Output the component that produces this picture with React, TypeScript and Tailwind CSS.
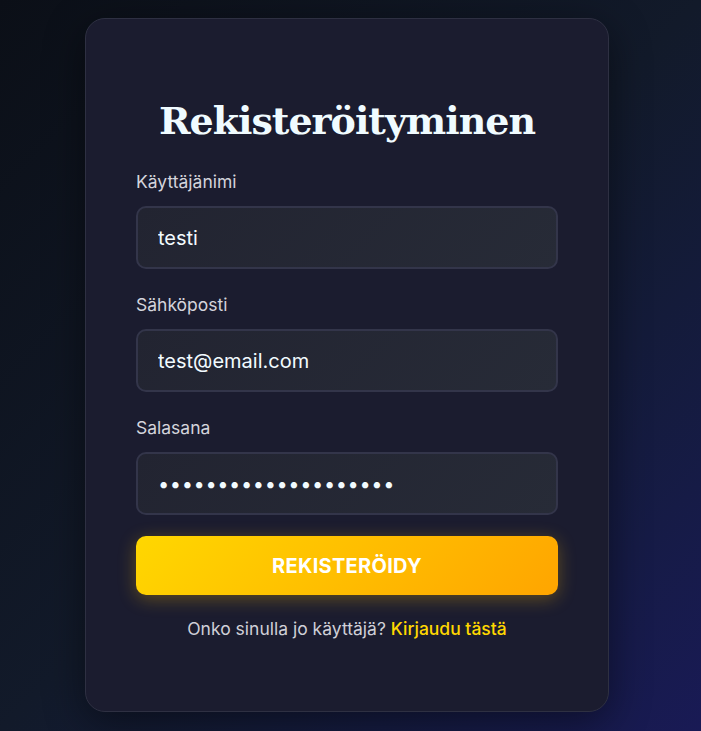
import { useState } from 'react';

const sans = { fontFamily: 'Inter, "Noto Sans", sans-serif' };

function Field({
  label,
  type = 'text',
  value,
  onChange,
}: {
  label: string;
  type?: string;
  value: string;
  onChange: (v: string) => void;
}) {
  return (
    <div className="flex flex-col">
      <label className="text-[17.5px] leading-6 text-[#d4d4dc] mb-3">{label}</label>
      <input
        type={type}
        value={value}
        onChange={(e) => onChange(e.target.value)}
        className={
          'h-[63px] w-full rounded-[10px] border-2 border-[#33354a] bg-[linear-gradient(135deg,#222431,#272b37)] px-[20px] text-[20px] text-[#f2fbff] outline-none ' +
          (type === 'password' ? 'tracking-[0.6px]' : '')
        }
      />
    </div>
  );
}

export default function App() {
  const [user, setUser] = useState('testi');
  const [email, setEmail] = useState('test@email.com');
  const [pass, setPass] = useState('salasana1234567890ab');

  return (
    <div
      className="min-h-[731px] w-full flex justify-center pt-[18px] pr-[7px] bg-gradient-to-br from-[#0b0f17] via-[#121a2a] to-[#191a55]"
      style={sans}
    >
      <div className="w-[524px] h-[694px] rounded-[20px] border border-[#2e3042] bg-[#1b1c2f] shadow-[0_10px_40px_rgba(0,0,0,0.45)] px-[50px] pt-[78px]">
        <h1
          className="text-center text-[38px] leading-[48px] font-bold tracking-[-1px] text-[#f0fbff] mb-[25px]"
          style={{ fontFamily: '"DejaVu Serif", "Liberation Serif", serif' }}
        >
          Rekisteröityminen
        </h1>
        <div className="flex flex-col gap-6">
          <Field label="Käyttäjänimi" value={user} onChange={setUser} />
          <Field label="Sähköposti" type="email" value={email} onChange={setEmail} />
          <Field label="Salasana" type="password" value={pass} onChange={setPass} />
        </div>
        <button className="mt-[21px] h-[59px] w-full rounded-[10px] bg-[linear-gradient(135deg,#ffd700,#ffa500)] text-[20px] font-bold tracking-[0.3px] text-white shadow-[0_4px_18px_rgba(255,190,0,0.3)]">
          REKISTERÖIDY
        </button>
        <p className="mt-[22px] text-center text-[17.5px] leading-6 text-[#d0d0d8]">
          Onko sinulla jo käyttäjä?{' '}
          <a href="#" className="font-medium text-[#ffd700]">
            Kirjaudu tästä
          </a>
        </p>
      </div>
    </div>
  );
}
